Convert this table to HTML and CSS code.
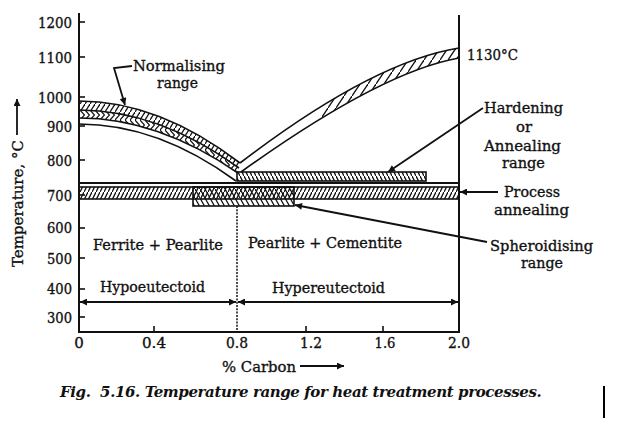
FILE: index.html
```html
<!DOCTYPE html>
<html lang="en">
<head>
<meta charset="utf-8">
<title>Fig. 5.16 Temperature range for heat treatment processes</title>
<link rel="stylesheet" href="styles.css">
</head>
<body>
<figure class="figure">
<svg class="chart" width="621" height="375" viewBox="0 0 621 375" xmlns="http://www.w3.org/2000/svg">
  <defs>
    <pattern id="fwd" patternUnits="userSpaceOnUse" width="4" height="8">
      <path d="M-1,10 L5,-2" class="hatch"/>
    </pattern>
    <pattern id="fwd5" patternUnits="userSpaceOnUse" width="5" height="8">
      <path d="M-1,9.6 L6,-1.6" class="hatch"/>
    </pattern>
    <pattern id="back" patternUnits="userSpaceOnUse" width="4" height="8">
      <path d="M-1,-2 L5,10" class="hatch"/>
    </pattern>
    <pattern id="back5" patternUnits="userSpaceOnUse" width="5" height="9">
      <path d="M-1,-1.8 L6,10.8" class="hatch"/>
    </pattern>
    <pattern id="chev" patternUnits="userSpaceOnUse" width="5" height="10">
      <path d="M0,0 L4.5,5 L0,10" class="hatch chevron"/>
    </pattern>
    <pattern id="steep" patternUnits="userSpaceOnUse" width="8" height="12">
      <path d="M-1,13.5 L9,-1.5" class="hatch"/>
    </pattern>
    <clipPath id="rightclip"><rect x="322" y="0" width="138" height="200"/></clipPath>
    <marker id="ah" viewBox="0 0 10 10" refX="10" refY="5" markerWidth="9" markerHeight="7" markerUnits="userSpaceOnUse" orient="auto-start-reverse">
      <path d="M0,0 L10,5 L0,10 Z" class="head"/>
    </marker>
  </defs>

  <!-- hatched curve bands -->
  <path class="fill-fwd5" d="M79,101 Q159,101 240,163 L239,168 Q159,110 79,110 Z"/>
  <path class="fill-chev" d="M79,110 Q159,110 239,168 L238,173 Q158,118 79,118 Z"/>
  <path class="fill-steep" clip-path="url(#rightclip)" d="M240,163 Q372,62 459,48 L459,58 Q380,72 241,172 Z"/>

  <!-- curve lines -->
  <path class="curve" d="M79,101 Q159,101 240,163"/>
  <path class="curve" d="M79,110 Q159,110 239,168"/>
  <path class="curve" d="M79,118 Q158,118 238,173"/>
  <path class="curve" d="M79,124 Q158,124 236,181"/>
  <path class="curve" d="M240,163 Q372,62 459,48"/>
  <path class="curve" d="M241,172 Q380,72 459,58"/>

  <!-- horizontal bars -->
  <rect class="bar fill-back" x="237" y="172" width="189" height="9"/>
  <line class="axis" x1="79" y1="183" x2="459" y2="183"/>
  <rect class="bar fill-fwd" x="79" y="187" width="380" height="12"/>
  <rect class="bar fill-back5" x="193" y="187" width="101" height="19"/>

  <!-- dotted eutectoid line -->
  <line class="dotted" x1="237" y1="206" x2="237" y2="331"/>

  <!-- axes -->
  <line class="axis" x1="79" y1="13" x2="79" y2="333"/>
  <line class="axis" x1="78" y1="332" x2="460" y2="332"/>
  <line class="axis" x1="459" y1="15" x2="459" y2="333"/>

  <!-- ticks -->
  <g class="tick">
    <line x1="79" y1="22" x2="85" y2="22"/>
    <line x1="79" y1="57" x2="85" y2="57"/>
    <line x1="79" y1="97" x2="85" y2="97"/>
    <line x1="79" y1="126" x2="85" y2="126"/>
    <line x1="79" y1="160" x2="85" y2="160"/>
    <line x1="79" y1="195" x2="85" y2="195"/>
    <line x1="79" y1="228" x2="85" y2="228"/>
    <line x1="79" y1="258" x2="85" y2="258"/>
    <line x1="79" y1="289" x2="85" y2="289"/>
    <line x1="79" y1="317" x2="85" y2="317"/>
    <line x1="154" y1="326" x2="154" y2="332"/>
    <line x1="306" y1="326" x2="306" y2="332"/>
    <line x1="383" y1="326" x2="383" y2="332"/>
  </g>

  <!-- y tick labels -->
  <g class="lbl num">
    <text x="72" y="28" textLength="34" lengthAdjust="spacingAndGlyphs">1200</text>
    <text x="72" y="63" textLength="34" lengthAdjust="spacingAndGlyphs">1100</text>
    <text x="72" y="103" textLength="34" lengthAdjust="spacingAndGlyphs">1000</text>
    <text x="72" y="132" textLength="25" lengthAdjust="spacingAndGlyphs">900</text>
    <text x="72" y="166" textLength="25" lengthAdjust="spacingAndGlyphs">800</text>
    <text x="72" y="201" textLength="25" lengthAdjust="spacingAndGlyphs">700</text>
    <text x="72" y="233" textLength="25" lengthAdjust="spacingAndGlyphs">600</text>
    <text x="72" y="264" textLength="25" lengthAdjust="spacingAndGlyphs">500</text>
    <text x="72" y="294" textLength="25" lengthAdjust="spacingAndGlyphs">400</text>
    <text x="72" y="323" textLength="25" lengthAdjust="spacingAndGlyphs">300</text>
  </g>

  <!-- x tick labels -->
  <g class="lbl mid">
    <text x="79" y="348">0</text>
    <text x="154" y="348" textLength="24" lengthAdjust="spacingAndGlyphs">0.4</text>
    <text x="237" y="348" textLength="22" lengthAdjust="spacingAndGlyphs">0.8</text>
    <text x="311" y="348" textLength="22" lengthAdjust="spacingAndGlyphs">1.2</text>
    <text x="385" y="348" textLength="21" lengthAdjust="spacingAndGlyphs">1.6</text>
    <text x="459" y="348" textLength="22" lengthAdjust="spacingAndGlyphs">2.0</text>
  </g>

  <!-- axis titles -->
  <text class="lbl" x="222" y="372" textLength="74" lengthAdjust="spacingAndGlyphs">% Carbon</text>
  <line class="arrow" x1="300" y1="366" x2="344" y2="366" marker-end="url(#ah)"/>
  <text class="lbl" transform="translate(23,267) rotate(-90)" x="0" y="0" textLength="127" lengthAdjust="spacingAndGlyphs">Temperature, °C</text>
  <line class="arrow" x1="17" y1="135" x2="17" y2="99" marker-end="url(#ah)"/>

  <!-- region labels -->
  <text class="lbl" x="93" y="250" textLength="130" lengthAdjust="spacingAndGlyphs">Ferrite + Pearlite</text>
  <text class="lbl" x="248" y="248" textLength="154" lengthAdjust="spacingAndGlyphs">Pearlite + Cementite</text>
  <text class="lbl" x="100" y="292" textLength="105" lengthAdjust="spacingAndGlyphs">Hypoeutectoid</text>
  <text class="lbl" x="272" y="293" textLength="113" lengthAdjust="spacingAndGlyphs">Hypereutectoid</text>
  <line class="arrow" x1="80" y1="302" x2="236" y2="302" marker-start="url(#ah)" marker-end="url(#ah)"/>
  <line class="arrow" x1="238" y1="302" x2="458" y2="302" marker-start="url(#ah)" marker-end="url(#ah)"/>

  <!-- callouts -->
  <text class="lbl" x="133" y="71" textLength="92" lengthAdjust="spacingAndGlyphs">Normalising</text>
  <text class="lbl" x="157" y="88" textLength="41" lengthAdjust="spacingAndGlyphs">range</text>
  <polyline class="arrow" points="132,66 114,68 125,105" marker-end="url(#ah)"/>

  <text class="lbl" x="467" y="60" textLength="51" lengthAdjust="spacingAndGlyphs">1130°C</text>

  <text class="lbl" x="484" y="113" textLength="79" lengthAdjust="spacingAndGlyphs">Hardening</text>
  <text class="lbl" x="516" y="132" textLength="16" lengthAdjust="spacingAndGlyphs">or</text>
  <text class="lbl" x="484" y="151" textLength="77" lengthAdjust="spacingAndGlyphs">Annealing</text>
  <text class="lbl" x="502" y="168" textLength="43" lengthAdjust="spacingAndGlyphs">range</text>
  <line class="arrow" x1="483" y1="108" x2="388" y2="172" marker-end="url(#ah)"/>

  <text class="lbl" x="504" y="197" textLength="56" lengthAdjust="spacingAndGlyphs">Process</text>
  <text class="lbl" x="494" y="215" textLength="75" lengthAdjust="spacingAndGlyphs">annealing</text>
  <line class="arrow" x1="498" y1="192" x2="460" y2="192" marker-end="url(#ah)"/>

  <text class="lbl" x="490" y="251" textLength="103" lengthAdjust="spacingAndGlyphs">Spheroidising</text>
  <text class="lbl" x="521" y="268" textLength="42" lengthAdjust="spacingAndGlyphs">range</text>
  <line class="arrow" x1="487" y1="242" x2="295" y2="205" marker-end="url(#ah)"/>
</svg>
<div class="caption-row">
  <figcaption class="caption">Fig.&nbsp; 5.16. Temperature range for heat treatment processes.</figcaption>
  <span class="cursor"></span>
</div>
</figure>
</body>
</html>
```

FILE: styles.css
```css
html, body {
  margin: 0;
  padding: 0;
  background: #ffffff;
}

body {
  width: 621px;
  height: 437px;
  overflow: hidden;
  font-family: "DejaVu Serif", "Liberation Serif", serif;
  color: #111;
}

.figure {
  margin: 0;
  display: flex;
  flex-direction: column;
}

.chart {
  display: block;
}

.hatch {
  stroke: #111;
  stroke-width: 1.3;
  fill: none;
}

.chevron {
  stroke-width: 1.2;
}

.head {
  fill: #111;
}

.fill-fwd { fill: url(#fwd); }
.fill-fwd5 { fill: url(#fwd5); }
.fill-back { fill: url(#back); }
.fill-back5 { fill: url(#back5); }
.fill-chev { fill: url(#chev); }
.fill-steep { fill: url(#steep); }

.curve {
  fill: none;
  stroke: #111;
  stroke-width: 1.6;
}

.bar {
  stroke: #111;
  stroke-width: 1.6;
}

.axis {
  stroke: #111;
  stroke-width: 2;
}

.tick line {
  stroke: #111;
  stroke-width: 1.6;
}

.dotted {
  stroke: #111;
  stroke-width: 1.5;
  stroke-dasharray: 2 1.3;
}

.arrow {
  fill: none;
  stroke: #111;
  stroke-width: 1.8;
}

.lbl {
  font-family: "DejaVu Serif", "Liberation Serif", serif;
  font-size: 15px;
  fill: #111;
  stroke: #111;
  stroke-width: 0.35px;
}

.num text {
  text-anchor: end;
}

.mid text {
  text-anchor: middle;
}

.caption-row {
  display: flex;
  align-items: flex-start;
  padding-top: 7px;
}

.caption {
  margin-left: 60px;
  font-family: "DejaVu Serif", "Liberation Serif", serif;
  font-style: italic;
  font-weight: bold;
  font-size: 15px;
  line-height: 20px;
  letter-spacing: -0.4px;
  white-space: nowrap;
  color: #111;
}

.cursor {
  margin-left: auto;
  margin-right: 16px;
  margin-top: 4px;
  width: 2px;
  height: 32px;
  background: #000;
}
```
